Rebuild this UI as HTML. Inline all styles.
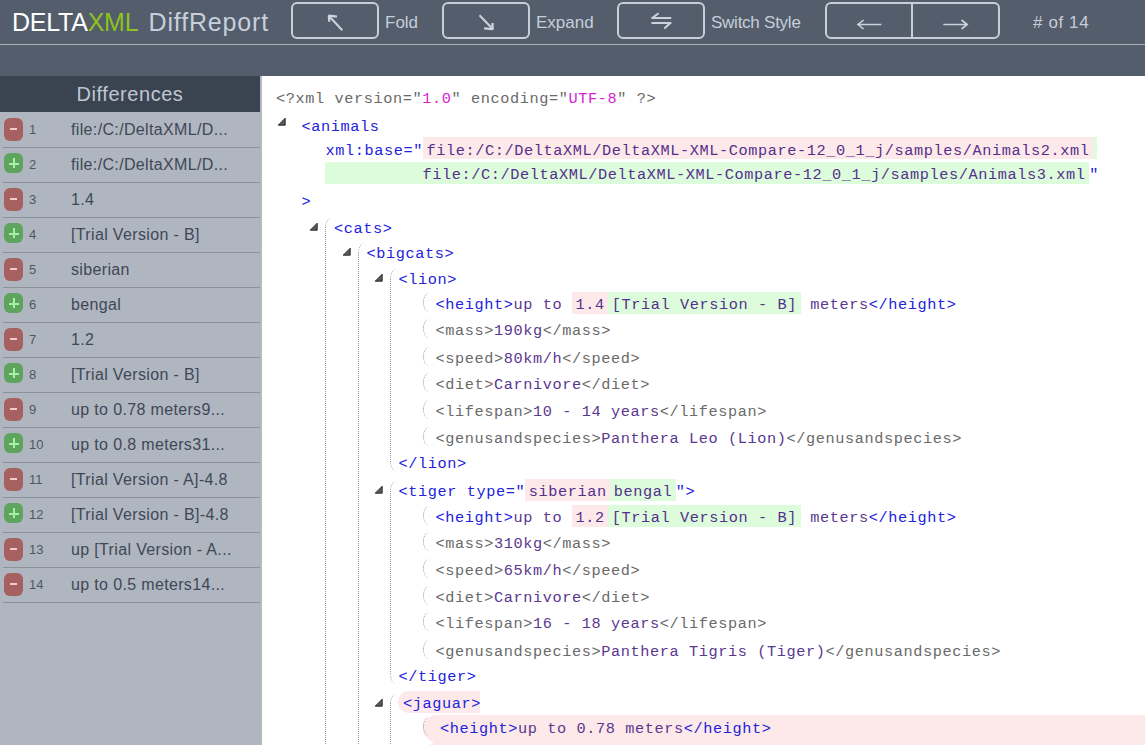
<!DOCTYPE html>
<html><head><meta charset="utf-8">
<style>
*{box-sizing:border-box}
html,body{margin:0;padding:0;width:1145px;height:745px;overflow:hidden;background:#535d6b;font-family:"Liberation Sans",sans-serif}
.abs{position:absolute}
#hdr{position:absolute;left:0;top:0;width:1145px;height:76px;background:#535d6b}
#hline{position:absolute;left:0;top:44px;width:1145px;height:1px;background:#aab0bd}
.logo{position:absolute;left:12px;top:5px;font-size:25px;white-space:nowrap;line-height:34px}
.btn{position:absolute;top:2px;height:37px;border:2px solid #c8cdda;border-radius:6px}
.lbl{position:absolute;top:11px;font-size:17px;color:#c8cdda;line-height:24px;white-space:nowrap}
.ico{position:absolute}
#side{position:absolute;left:0;top:76px;width:262px;height:669px;background:#b0b6bf}
#sideh{position:absolute;left:0;top:76px;width:260px;height:36px;background:#3a4451;color:#c0c6d1;font-size:20px;text-align:center;line-height:36px;letter-spacing:0.55px}
.sep{position:absolute;left:3px;width:257px;height:1px;background:#8b929b}
.bd{position:absolute;left:4px;width:19px;border-radius:6px}
.bd.r{background:#a66060;height:23px}
.bd.g{background:#5ea35e;height:20px}
.mn{position:absolute;left:10px;width:7px;height:2px;background:#f3c9c9}
.pl1{position:absolute;left:8.5px;width:10px;height:2px;background:#a2f2a2}
.pl2{position:absolute;left:12.5px;width:2px;height:10px;background:#a2f2a2}
.num{position:absolute;left:29px;font-size:13px;line-height:15px;color:#50565f}
.txt{position:absolute;left:71px;font-size:16px;line-height:18px;letter-spacing:0.35px;color:#3e4857;white-space:nowrap}
#code{position:absolute;left:261px;top:76px;width:884px;height:669px;background:#fff;border-left:1px solid #b9bcc0}
.ln{position:absolute;white-space:pre;font-family:"Liberation Mono",monospace;font-size:15.25px;letter-spacing:0.6px;line-height:22px;height:22px}
.b{color:#2323dc}
.gy{color:#6a6a6a}
.p{color:#5a3890}
.m{color:#d21ed2}
.del{background:#fde9e9;padding:0 3.5px;color:#55308c;display:inline-block;vertical-align:top;height:22px;position:relative;top:-2px;padding-top:2px}
.add{background:#dcfcdc;padding:0 3.5px;color:#55308c;display:inline-block;vertical-align:top;height:22px;position:relative;top:-2px;padding-top:2px}
.addpl{background:#dcfcdc;padding:0 0 0 3.5px;display:inline-block;vertical-align:top;height:22px;position:relative;top:-2px;padding-top:2px}
.add0{background:#dcfcdc;padding:0 3.5px 0 0;color:#55308c;display:inline-block;vertical-align:top;height:22px;position:relative;top:-2px;padding-top:2px}
.tri{position:absolute}
.vl{position:absolute;width:20px;border-left:1px dotted #999;border-radius:6px 0 0 6px / 10px 0 0 10px}
.leaf{position:absolute;width:10px;height:19px;border-left:1px dotted #8a8a8a;border-radius:6px 0 0 6px / 9.5px 0 0 9.5px}
.jbg{position:absolute;background:#fde9e9;border-radius:11px 0 0 11px}
.jbg2{position:absolute;background:#fde9e9;border-radius:13px 0 0 13px}
.dl{position:absolute;width:1px;background:repeating-linear-gradient(to bottom,#999 0,#999 1px,#fff 1px,#fff 2px)}
.del3{background:#fde9e9;padding:3px 3.5px 0;color:#55308c;display:inline-block;vertical-align:top;height:22px;position:relative;top:-3px}
.addpl3{background:#dcfcdc;padding:0 0 0 3.5px;display:inline-block;vertical-align:top;height:22px;position:relative;top:-3px}
.add03{background:#dcfcdc;padding:2.5px 3.5px 0 0;color:#55308c;display:inline-block;vertical-align:top;height:22px;position:relative;top:-2.5px}

</style></head><body>
<div id="hdr"></div>
<div id="hline"></div>
<div class="logo" style="letter-spacing:-0.25px"><span style="color:#fff">DELTA</span><span style="color:#8dc21f">XML</span></div><div class="logo" style="left:148.5px;letter-spacing:0.85px;color:#c8cfdc">DiffReport</div>
<div class="btn" style="left:291px;width:88px"></div>
<div class="lbl" style="left:385px">Fold</div>
<div class="btn" style="left:442px;width:88px"></div>
<div class="lbl" style="left:536px">Expand</div>
<div class="btn" style="left:617px;width:88px"></div>
<div class="lbl" style="left:711px;letter-spacing:-0.25px">Switch Style</div>
<div class="btn" style="left:825px;width:175px"></div>
<div class="abs" style="left:911px;top:2px;width:2px;height:37px;background:#c8cdda"></div>
<div class="lbl" style="left:1033px;letter-spacing:0.6px"># of 14</div>
<svg class="abs" style="left:0;top:0" width="1145" height="45" viewBox="0 0 1145 45">
<g stroke="#cdd2e0" fill="none" stroke-linecap="butt" stroke-linejoin="miter">
<path d="M328.5 15.5 L342.3 30.3" stroke-width="2"/>
<path d="M337 16.6 L328.9 15.6 L329.3 21.8" stroke-width="2.3" stroke-linejoin="bevel"/>
<path d="M479.5 15.3 L493.2 29.5" stroke-width="2"/>
<path d="M484.1 28.4 L492.6 29.2 L492.5 23" stroke-width="2.3" stroke-linejoin="bevel"/>
<path d="M651.5 17.9 L671.3 17.9 M651.5 22.9 L671.3 22.9" stroke-width="2"/>
<path d="M651.8 18.2 L658.6 13.3 M670.9 22.6 L664.3 28.4" stroke-width="2"/>
<path d="M857.8 24.5 L881.4 24.5" stroke-width="1.5"/>
<path d="M863.6 20 L858 24.5 L863.6 29" stroke-width="1.6"/>
<path d="M943.3 24.5 L967.2 24.5" stroke-width="1.5"/>
<path d="M961.5 20 L967.2 24.5 L961.5 29" stroke-width="1.6"/>
</g></svg>

<div id="side"></div>
<div id="sideh">Differences</div>
<div class="bd r" style="top:118px"></div>
<div class="mn" style="top:128px"></div>
<div class="num" style="top:122.0px">1</div>
<div class="txt" style="top:121px">file:/C:/DeltaXML/D...</div>
<div class="sep" style="top:147px"></div>
<div class="bd g" style="top:153px"></div>
<div class="pl1" style="top:163px"></div>
<div class="pl2" style="top:158px"></div>
<div class="num" style="top:157.0px">2</div>
<div class="txt" style="top:156px">file:/C:/DeltaXML/D...</div>
<div class="sep" style="top:182px"></div>
<div class="bd r" style="top:188px"></div>
<div class="mn" style="top:198px"></div>
<div class="num" style="top:192.0px">3</div>
<div class="txt" style="top:191px">1.4</div>
<div class="sep" style="top:217px"></div>
<div class="bd g" style="top:223px"></div>
<div class="pl1" style="top:233px"></div>
<div class="pl2" style="top:228px"></div>
<div class="num" style="top:227.0px">4</div>
<div class="txt" style="top:226px">[Trial Version - B]</div>
<div class="sep" style="top:252px"></div>
<div class="bd r" style="top:258px"></div>
<div class="mn" style="top:268px"></div>
<div class="num" style="top:262.0px">5</div>
<div class="txt" style="top:261px">siberian</div>
<div class="sep" style="top:287px"></div>
<div class="bd g" style="top:293px"></div>
<div class="pl1" style="top:303px"></div>
<div class="pl2" style="top:298px"></div>
<div class="num" style="top:297.0px">6</div>
<div class="txt" style="top:296px">bengal</div>
<div class="sep" style="top:322px"></div>
<div class="bd r" style="top:328px"></div>
<div class="mn" style="top:338px"></div>
<div class="num" style="top:332.0px">7</div>
<div class="txt" style="top:331px">1.2</div>
<div class="sep" style="top:357px"></div>
<div class="bd g" style="top:363px"></div>
<div class="pl1" style="top:373px"></div>
<div class="pl2" style="top:368px"></div>
<div class="num" style="top:367.0px">8</div>
<div class="txt" style="top:366px">[Trial Version - B]</div>
<div class="sep" style="top:392px"></div>
<div class="bd r" style="top:398px"></div>
<div class="mn" style="top:408px"></div>
<div class="num" style="top:402.0px">9</div>
<div class="txt" style="top:401px">up to 0.78 meters9...</div>
<div class="sep" style="top:427px"></div>
<div class="bd g" style="top:433px"></div>
<div class="pl1" style="top:443px"></div>
<div class="pl2" style="top:438px"></div>
<div class="num" style="top:437.0px">10</div>
<div class="txt" style="top:436px">up to 0.8 meters31...</div>
<div class="sep" style="top:462px"></div>
<div class="bd r" style="top:468px"></div>
<div class="mn" style="top:478px"></div>
<div class="num" style="top:472.0px">11</div>
<div class="txt" style="top:471px">[Trial Version - A]-4.8</div>
<div class="sep" style="top:497px"></div>
<div class="bd g" style="top:503px"></div>
<div class="pl1" style="top:513px"></div>
<div class="pl2" style="top:508px"></div>
<div class="num" style="top:507.0px">12</div>
<div class="txt" style="top:506px">[Trial Version - B]-4.8</div>
<div class="sep" style="top:532px"></div>
<div class="bd r" style="top:538px"></div>
<div class="mn" style="top:548px"></div>
<div class="num" style="top:542.0px">13</div>
<div class="txt" style="top:541px">up [Trial Version - A...</div>
<div class="sep" style="top:567px"></div>
<div class="bd r" style="top:573px"></div>
<div class="mn" style="top:583px"></div>
<div class="num" style="top:577.0px">14</div>
<div class="txt" style="top:576px">up to 0.5 meters14...</div>
<div class="sep" style="top:602px"></div>
<div id="code"></div>
<div class="jbg" style="left:398px;top:691px;width:82px;height:22px"></div>
<div class="jbg2" style="left:423px;top:715px;width:730px;height:27px"></div>
<div class="jbg2" style="left:426px;top:741px;width:730px;height:27px"></div>
<svg class="tri" style="left:276.8px;top:116.8px" width="9" height="9" viewBox="0 0 9 9"><path d="M8.2 1.2 L8.2 8.2 L1.2 8.2 Z" fill="#5a5a5a" stroke="#1e1e1e" stroke-width="0.9" stroke-linejoin="round"/></svg>
<svg class="tri" style="left:308.8px;top:221.8px" width="9" height="9" viewBox="0 0 9 9"><path d="M8.2 1.2 L8.2 8.2 L1.2 8.2 Z" fill="#5a5a5a" stroke="#1e1e1e" stroke-width="0.9" stroke-linejoin="round"/></svg>
<svg class="tri" style="left:341.8px;top:246.8px" width="9" height="9" viewBox="0 0 9 9"><path d="M8.2 1.2 L8.2 8.2 L1.2 8.2 Z" fill="#5a5a5a" stroke="#1e1e1e" stroke-width="0.9" stroke-linejoin="round"/></svg>
<svg class="tri" style="left:373.8px;top:272.8px" width="9" height="9" viewBox="0 0 9 9"><path d="M8.2 1.2 L8.2 8.2 L1.2 8.2 Z" fill="#5a5a5a" stroke="#1e1e1e" stroke-width="0.9" stroke-linejoin="round"/></svg>
<svg class="tri" style="left:373.8px;top:484.8px" width="9" height="9" viewBox="0 0 9 9"><path d="M8.2 1.2 L8.2 8.2 L1.2 8.2 Z" fill="#5a5a5a" stroke="#1e1e1e" stroke-width="0.9" stroke-linejoin="round"/></svg>
<svg class="tri" style="left:373.8px;top:697.8px" width="9" height="9" viewBox="0 0 9 9"><path d="M8.2 1.2 L8.2 8.2 L1.2 8.2 Z" fill="#5a5a5a" stroke="#1e1e1e" stroke-width="0.9" stroke-linejoin="round"/></svg>
<div class="vl" style="left:325px;top:218px;height:567px"></div>
<div class="dl" style="left:325px;top:227px;height:518px"></div>
<div class="vl" style="left:358px;top:243px;height:542px"></div>
<div class="dl" style="left:358px;top:253px;height:492px"></div>
<div class="vl" style="left:390px;top:269px;height:202px"></div>
<div class="dl" style="left:390px;top:279px;height:183px"></div>
<div class="vl" style="left:390px;top:481px;height:203px"></div>
<div class="dl" style="left:390px;top:491px;height:184px"></div>
<div class="vl" style="left:390px;top:694px;height:91px"></div>
<div class="dl" style="left:390px;top:703px;height:42px"></div>
<div class="leaf" style="left:423px;top:292.7px"></div>
<div class="leaf" style="left:423px;top:319.4px"></div>
<div class="leaf" style="left:423px;top:346.8px"></div>
<div class="leaf" style="left:423px;top:373.0px"></div>
<div class="leaf" style="left:423px;top:400.0px"></div>
<div class="leaf" style="left:423px;top:426.6px"></div>
<div class="leaf" style="left:423px;top:505.6px"></div>
<div class="leaf" style="left:423px;top:532.3px"></div>
<div class="leaf" style="left:423px;top:558.7px"></div>
<div class="leaf" style="left:423px;top:585.5px"></div>
<div class="leaf" style="left:423px;top:612.3px"></div>
<div class="leaf" style="left:423px;top:639.6px"></div>
<div class="leaf" style="left:423px;top:717.2px"></div>
<div class="ln" id="L1" style="top:88.20px;left:276.00px"><span class="gy">&lt;?xml version=&quot;</span><span class="m">1.0</span><span class="gy">&quot; encoding=&quot;</span><span class="m">UTF-8</span><span class="gy">&quot; ?&gt;</span></div>
<div class="ln" id="L2" style="top:115.50px;left:301.50px"><span class="b">&lt;animals</span></div>
<div class="ln" id="L3" style="top:139.80px;left:325.50px"><span class="b">xml:base=&quot;</span><span class="del3">file:/C:/DeltaXML/DeltaXML-XML-Compare-12_0_1_j/samples/Animals2.xml</span><span class="addpl3"></span></div>
<div class="ln" id="L4" style="top:164.00px;left:325.00px"><span class="add03">          file:/C:/DeltaXML/DeltaXML-XML-Compare-12_0_1_j/samples/Animals3.xml</span><span class="b">&quot;</span></div>
<div class="ln" id="L5" style="top:191.30px;left:301.50px"><span class="b">&gt;</span></div>
<div class="ln" id="L6" style="top:217.80px;left:334.00px"><span class="b">&lt;cats&gt;</span></div>
<div class="ln" id="L7" style="top:242.60px;left:366.50px"><span class="b">&lt;bigcats&gt;</span></div>
<div class="ln" id="L8" style="top:268.80px;left:398.50px"><span class="b">&lt;lion&gt;</span></div>
<div class="ln" id="L9" style="top:293.70px;left:435.50px"><span class="b">&lt;height&gt;</span><span class="p">up to </span><span class="del">1.4</span><span class="add">[Trial Version - B]</span><span class="p"> meters</span><span class="b">&lt;/height&gt;</span></div>
<div class="ln" id="L10" style="top:320.40px;left:435.50px"><span class="gy">&lt;mass&gt;</span><span class="p">190kg</span><span class="gy">&lt;/mass&gt;</span></div>
<div class="ln" id="L11" style="top:347.80px;left:435.50px"><span class="gy">&lt;speed&gt;</span><span class="p">80km/h</span><span class="gy">&lt;/speed&gt;</span></div>
<div class="ln" id="L12" style="top:374.00px;left:435.50px"><span class="gy">&lt;diet&gt;</span><span class="p">Carnivore</span><span class="gy">&lt;/diet&gt;</span></div>
<div class="ln" id="L13" style="top:401.00px;left:435.50px"><span class="gy">&lt;lifespan&gt;</span><span class="p">10 - 14 years</span><span class="gy">&lt;/lifespan&gt;</span></div>
<div class="ln" id="L14" style="top:427.60px;left:435.50px"><span class="gy">&lt;genusandspecies&gt;</span><span class="p">Panthera Leo (Lion)</span><span class="gy">&lt;/genusandspecies&gt;</span></div>
<div class="ln" id="L15" style="top:452.50px;left:398.50px"><span class="b">&lt;/lion&gt;</span></div>
<div class="ln" id="L16" style="top:481.20px;left:398.50px"><span class="b">&lt;tiger type=&quot;</span><span class="del">siberian</span><span class="add">bengal</span><span class="b">&quot;&gt;</span></div>
<div class="ln" id="L17" style="top:506.60px;left:435.50px"><span class="b">&lt;height&gt;</span><span class="p">up to </span><span class="del">1.2</span><span class="add">[Trial Version - B]</span><span class="p"> meters</span><span class="b">&lt;/height&gt;</span></div>
<div class="ln" id="L18" style="top:533.30px;left:435.50px"><span class="gy">&lt;mass&gt;</span><span class="p">310kg</span><span class="gy">&lt;/mass&gt;</span></div>
<div class="ln" id="L19" style="top:559.70px;left:435.50px"><span class="gy">&lt;speed&gt;</span><span class="p">65km/h</span><span class="gy">&lt;/speed&gt;</span></div>
<div class="ln" id="L20" style="top:586.50px;left:435.50px"><span class="gy">&lt;diet&gt;</span><span class="p">Carnivore</span><span class="gy">&lt;/diet&gt;</span></div>
<div class="ln" id="L21" style="top:613.30px;left:435.50px"><span class="gy">&lt;lifespan&gt;</span><span class="p">16 - 18 years</span><span class="gy">&lt;/lifespan&gt;</span></div>
<div class="ln" id="L22" style="top:640.60px;left:435.50px"><span class="gy">&lt;genusandspecies&gt;</span><span class="p">Panthera Tigris (Tiger)</span><span class="gy">&lt;/genusandspecies&gt;</span></div>
<div class="ln" id="L23" style="top:666.30px;left:398.50px"><span class="b">&lt;/tiger&gt;</span></div>
<div class="ln" id="L24" style="top:693.10px;left:403.00px"><span class="b">&lt;jaguar&gt;</span></div>
<div class="ln" id="L25" style="top:718.20px;left:440.00px"><span class="b">&lt;height&gt;</span><span class="p">up to 0.78 meters</span><span class="b">&lt;/height&gt;</span></div>
</body></html>
